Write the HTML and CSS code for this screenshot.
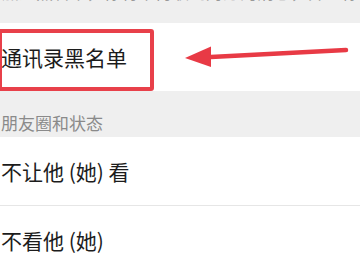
FILE: index.html
```html
<!DOCTYPE html>
<html lang="zh">
<head>
<meta charset="utf-8">
<link rel="stylesheet" href="styles.css">
</head>
<body>
<div class="page">
  <div class="desc"><p class="desc-text">加入黑名单，你将不再收到对方的消息，并且你们互相看不到对方朋友圈的更新</p></div>
  <div class="row row-first">
    <span class="label">通讯录黑名单</span>
    <div class="mark-box"></div>
    <svg class="arrow" width="360" height="68" viewBox="0 23 360 68">
      <line x1="346" y1="50" x2="206" y2="57.3" stroke="#e83a45" stroke-width="4.5" stroke-linecap="round"/>
      <polygon points="185,58 211,46.5 211,67" fill="#e83a45"/>
    </svg>
  </div>
  <div class="section-title">朋友圈和状态</div>
  <div class="row">
    <span class="label">不让他 (她) 看</span>
  </div>
  <div class="divider"></div>
  <div class="row">
    <span class="label">不看他 (她)</span>
  </div>
</div>
</body>
</html>
```
FILE: styles.css
```css
html, body {
  margin: 0;
  padding: 0;
  background: #efefef;
}
.page {
  width: 360px;
  height: 270px;
  overflow: hidden;
  background: #efefef;
  font-family: "Noto Sans CJK SC", "Noto Sans", sans-serif;
}
.desc {
  height: 23px;
  overflow: hidden;
}
.desc-text {
  margin: -18px 0 0 2px;
  font-size: 17px;
  line-height: 20px;
  color: #999;
  white-space: nowrap;
}
.row {
  position: relative;
  height: 68px;
  background: #fff;
  display: flex;
  align-items: center;
  padding-left: 1px;
}
.label {
  font-size: 21px;
  color: #1c1c1c;
  line-height: 28px;
}
.mark-box {
  position: absolute;
  left: -2px;
  top: 6px;
  width: 148px;
  height: 54px;
  border: 4px solid #e8404a;
  border-radius: 3px;
}
.arrow {
  position: absolute;
  left: 0;
  top: 0;
}
.section-title {
  height: 46px;
  box-sizing: border-box;
  padding: 20px 0 0 1px;
  font-size: 17px;
  line-height: 24px;
  color: #8a8a8a;
}
.divider {
  height: 1px;
  background: #e6e6e6;
}
```
